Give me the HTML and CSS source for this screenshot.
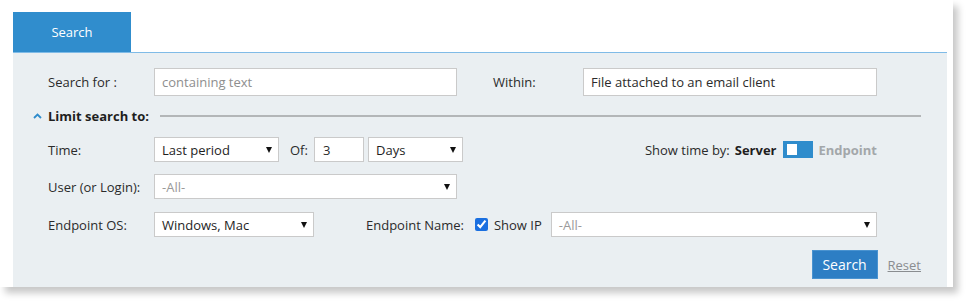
FILE: index.html
```html
<!DOCTYPE html>
<html>
<head>
<meta charset="utf-8">
<link rel="stylesheet" href="styles.css">
</head>
<body>
<div class="card">
  <div class="tabs">
    <div class="tab">Search</div>
  </div>
  <div class="panel">
    <div class="row row-first">
      <label class="lbl">Search for :</label>
      <input class="field w303" type="text" placeholder="containing text">
      <label class="lbl lbl-within">Within:</label>
      <input class="field w294" type="text" value="File attached to an email client">
    </div>

    <div class="limit">
      <span class="chev"><svg width="9" height="6" viewBox="0 0 9 6"><path d="M1 5 L4.5 1.5 L8 5" fill="none" stroke="#2f8ccc" stroke-width="1.8"/></svg></span>
      <span class="limit-title">Limit search to:</span>
      <span class="limit-line"></span>
    </div>

    <div class="row row-time">
      <label class="lbl">Time:</label>
      <div class="select w125"><span>Last period</span><i class="tri"></i></div>
      <label class="lbl-of">Of:</label>
      <input class="field w50" type="text" value="3">
      <div class="select w95 ml4"><span>Days</span><i class="tri"></i></div>
      <div class="timeby">
        <span class="timeby-lbl">Show time by:</span>
        <b class="server">Server</b>
        <span class="toggle"><span class="knob"></span></span>
        <b class="endpoint">Endpoint</b>
      </div>
    </div>

    <div class="row row-user">
      <label class="lbl">User (or Login):</label>
      <div class="select w303"><span class="muted">-All-</span><i class="tri"></i></div>
    </div>

    <div class="row row-os">
      <label class="lbl">Endpoint OS:</label>
      <div class="select w160"><span>Windows, Mac</span><i class="tri"></i></div>
      <label class="lbl-ename">Endpoint Name:</label>
      <input class="chk" type="checkbox" checked>
      <span class="showip">Show IP</span>
      <div class="select w326"><span class="muted">-All-</span><i class="tri"></i></div>
    </div>

    <div class="actions">
      <button class="btn">Search</button>
      <a class="reset" href="#">Reset</a>
    </div>
  </div>
</div>
</body>
</html>
```

FILE: styles.css
```css
* { box-sizing: border-box; }
html, body { margin: 0; padding: 0; background: #fff; }
body {
  font-family: "Open Sans", "Liberation Sans", sans-serif;
  font-size: 13px;
  color: #2b2b2b;
  height: 306px;
}
.card {
  width: 953px;
  height: 287px;
  background: #fff;
  padding: 12px 6px 0 13px;
  box-shadow: 5px 6px 7px rgba(0, 0, 0, 0.22);
  display: flex;
  flex-direction: column;
}
.tabs {
  display: flex;
  border-bottom: 1px solid #7fbbe7;
}
.tab {
  width: 118px;
  height: 40px;
  background: #308dcd;
  color: #fff;
  display: flex;
  align-items: center;
  justify-content: center;
  font-size: 13px;
}
.panel {
  flex: 1;
  background: #eaeff2;
  padding: 15px 26px 0 35px;
  display: flex;
  flex-direction: column;
}
.row {
  display: flex;
  align-items: center;
}
.lbl {
  width: 106px;
  flex: none;
}
.field {
  font-family: inherit;
  font-size: 13px;
  color: #2b2b2b;
  border: 1px solid #cacaca;
  background: #fff;
  height: 27px;
  padding: 0 7px;
  outline: none;
}
.field::placeholder { color: #8e8e8e; }
.row-first .field { height: 28px; }
.w303 { width: 303px; }
.w294 { width: 294px; }
.w50 { width: 50px; padding: 0 8px; }
.w125 { width: 125px; }
.w95 { width: 95px; }
.w160 { width: 160px; }
.w326 { width: 326px; }
.ml4 { margin-left: 4px; }
.lbl-within {
  width: 90px;
  margin-left: 36px;
}
.limit {
  display: flex;
  align-items: center;
  height: 20px;
  margin-top: 10px;
  margin-left: -15px;
}
.chev {
  width: 15px;
  display: flex;
  align-items: center;
  margin-top: -1px;
}
.limit-title {
  font-weight: bold;
  color: #1e1e1e;
}
.limit-line {
  flex: 1;
  height: 2px;
  background: #b3b6b8;
  margin-left: 11px;
}
.row-time { margin-top: 11px; height: 25px; }
.select {
  height: 25px;
  background: #fff;
  border: 1px solid #cacaca;
  display: flex;
  align-items: center;
  justify-content: space-between;
  padding: 0 6px 0 7px;
  color: #1e1e1e;
  flex: none;
}
.select .muted { color: #9a9a9a; }
.tri {
  width: 0;
  height: 0;
  border-left: 3.5px solid transparent;
  border-right: 3.5px solid transparent;
  border-top: 6px solid #111;
  margin-top: 1px;
}
.lbl-of {
  margin-left: 11px;
  width: 24px;
}
.row-time .field { height: 25px; }
.timeby {
  margin-left: auto;
  margin-right: 44px;
  display: flex;
  align-items: center;
}
.server {
  margin-left: 5px;
  color: #1e1e1e;
}
.toggle {
  width: 30px;
  height: 17px;
  background: #2f8ccc;
  margin-left: 6px;
  display: flex;
  align-items: center;
  padding-left: 4px;
}
.knob {
  width: 10px;
  height: 11px;
  background: #fff;
}
.endpoint {
  color: #a3a7aa;
  margin-left: 6px;
}
.row-user { margin-top: 12px; }
.row-os { margin-top: 13px; }
.lbl-ename {
  margin-left: 52px;
}
.chk {
  width: 13px;
  height: 13px;
  margin: 0 0 0 11px;
  accent-color: #1a6fe0;
}
.showip {
  margin-left: 6px;
  margin-right: 9px;
}
.actions {
  display: flex;
  align-items: center;
  justify-content: flex-end;
  margin-top: 13px;
}
.btn {
  width: 66px;
  height: 29px;
  background: #2d7ec4;
  color: #fff;
  border: 1px solid #4a93d0;
  font-family: inherit;
  font-size: 14px;
  padding: 0;
}
.reset {
  margin-left: 10px;
  color: #8a8d90;
  text-decoration: underline;
  margin-top: 1px;
}
```
